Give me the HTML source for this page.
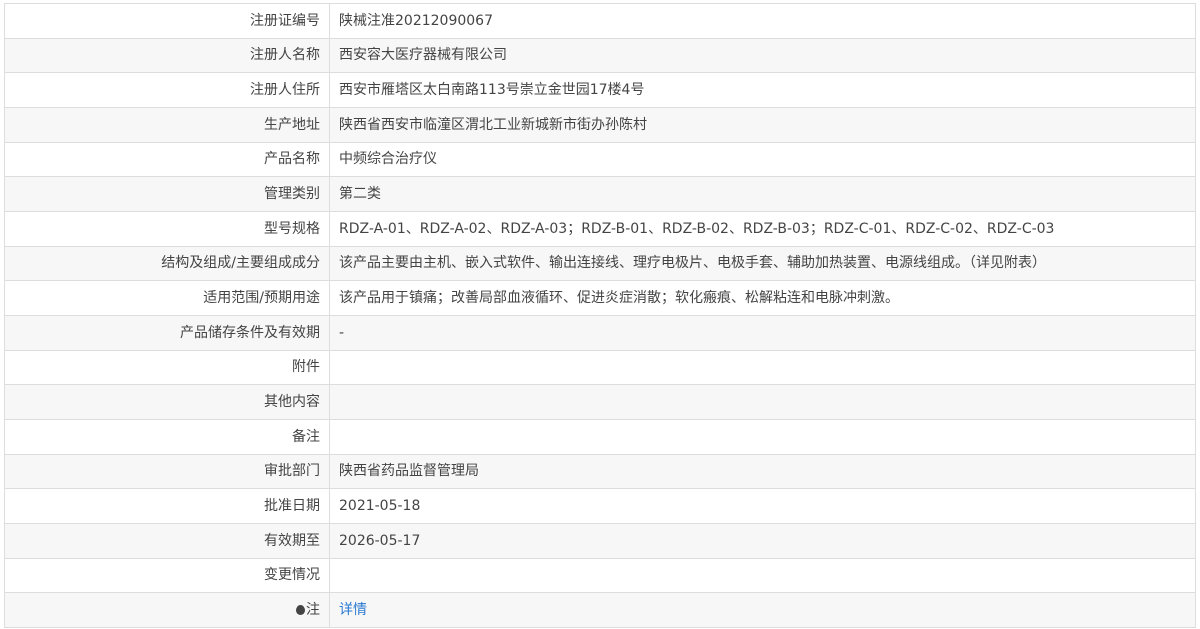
<!DOCTYPE html>
<html><head><meta charset="utf-8"><style>
body{margin:0;background:#fff;font-family:"DejaVu Sans","Noto Sans CJK SC",sans-serif;font-size:14px;color:#444}
table{position:absolute;left:4px;top:3px;width:1192px;border-collapse:collapse}
td{border:1px solid #ddd;height:34.67px;padding:0 9px;line-height:20px;box-sizing:border-box}
td.l{width:325px;text-align:right}
tr:nth-child(even){background:#f7f7f7}
a{color:#2a7ad2;text-decoration:none}
.b{display:inline-block;width:9px;height:10px;background:#444;border-radius:50% 50% 50% 50%/55% 55% 45% 45%;vertical-align:-1px;margin-right:1px}
</style></head><body>
<table>
<tr><td class="l">注册证编号</td><td>陕械注准20212090067</td></tr>
<tr><td class="l">注册人名称</td><td>西安容大医疗器械有限公司</td></tr>
<tr><td class="l">注册人住所</td><td>西安市雁塔区太白南路113号崇立金世园17楼4号</td></tr>
<tr><td class="l">生产地址</td><td>陕西省西安市临潼区渭北工业新城新市街办孙陈村</td></tr>
<tr><td class="l">产品名称</td><td>中频综合治疗仪</td></tr>
<tr><td class="l">管理类别</td><td>第二类</td></tr>
<tr><td class="l">型号规格</td><td>RDZ-A-01、RDZ-A-02、RDZ-A-03；RDZ-B-01、RDZ-B-02、RDZ-B-03；RDZ-C-01、RDZ-C-02、RDZ-C-03</td></tr>
<tr><td class="l">结构及组成/主要组成成分</td><td>该产品主要由主机、嵌入式软件、输出连接线、理疗电极片、电极手套、辅助加热装置、电源线组成。（详见附表）</td></tr>
<tr><td class="l">适用范围/预期用途</td><td>该产品用于镇痛；改善局部血液循环、促进炎症消散；软化瘢痕、松解粘连和电脉冲刺激。</td></tr>
<tr><td class="l">产品储存条件及有效期</td><td>-</td></tr>
<tr><td class="l">附件</td><td></td></tr>
<tr><td class="l">其他内容</td><td></td></tr>
<tr><td class="l">备注</td><td></td></tr>
<tr><td class="l">审批部门</td><td>陕西省药品监督管理局</td></tr>
<tr><td class="l">批准日期</td><td>2021-05-18</td></tr>
<tr><td class="l">有效期至</td><td>2026-05-17</td></tr>
<tr><td class="l">变更情况</td><td></td></tr>
<tr><td class="l"><span class="b"></span>注</td><td><a>详情</a></td></tr>
</table>
</body></html>
